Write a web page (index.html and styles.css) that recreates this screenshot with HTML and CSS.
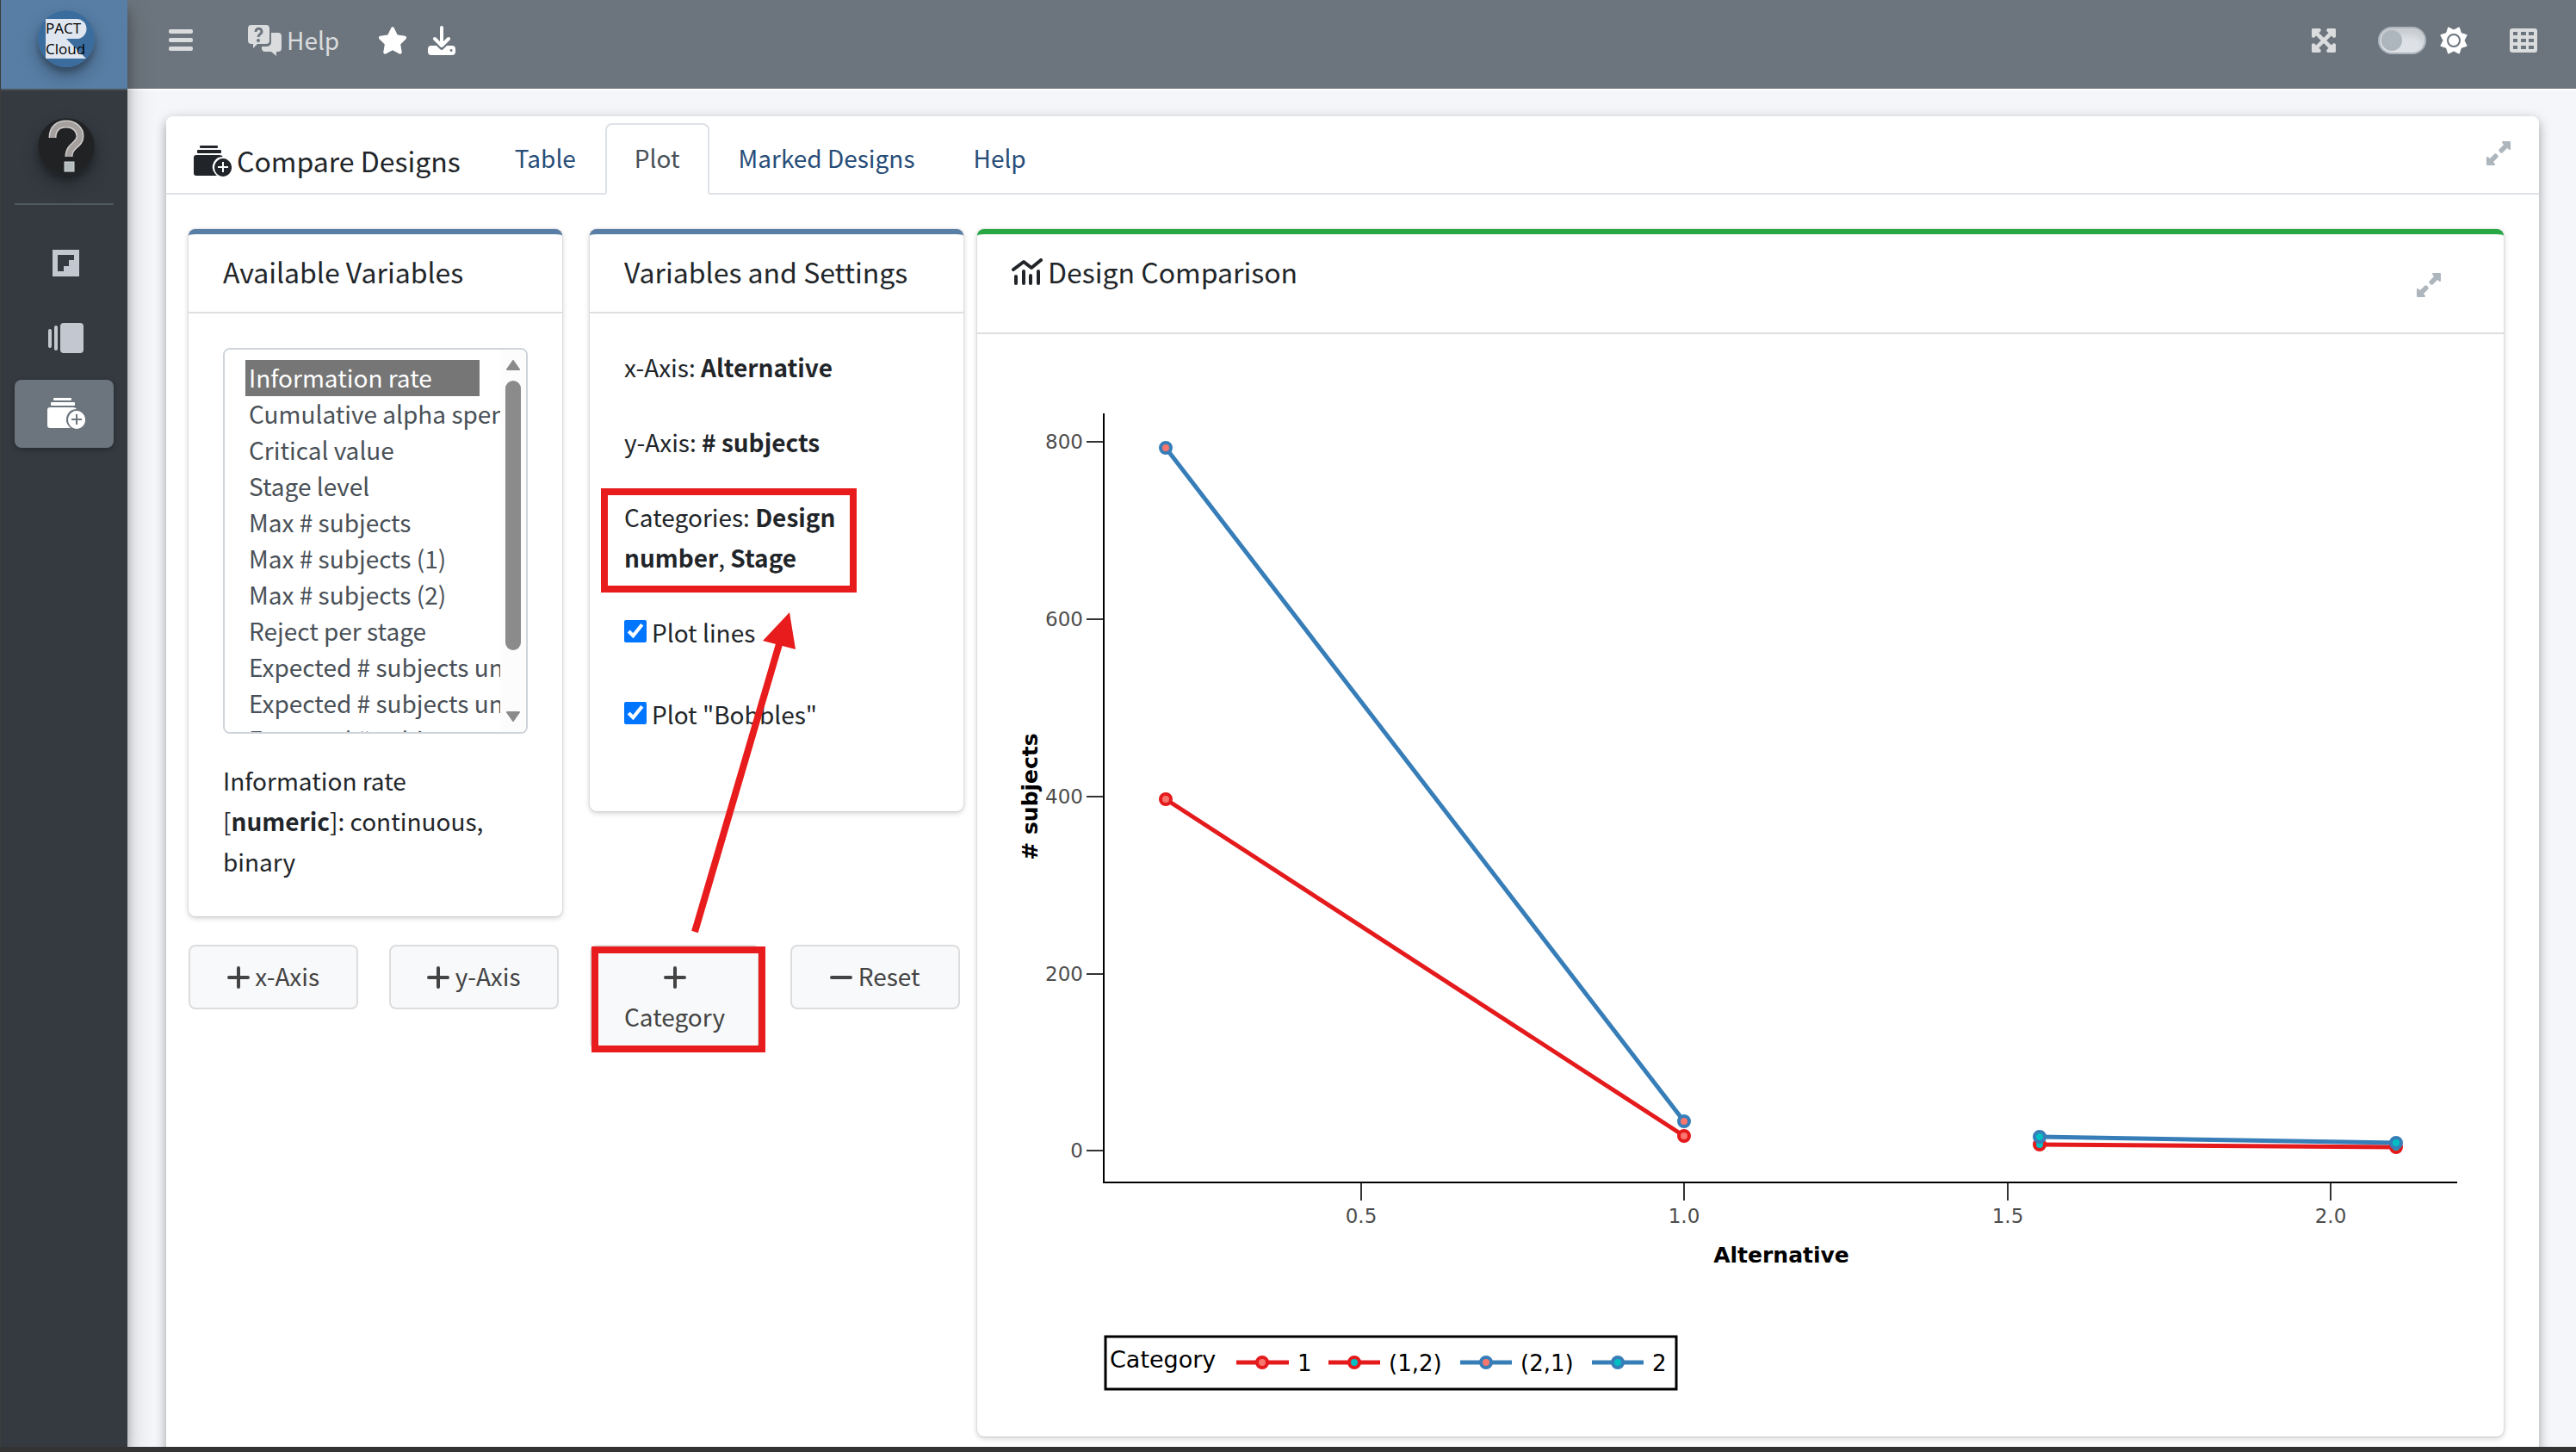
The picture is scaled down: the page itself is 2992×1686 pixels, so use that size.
FILE: index.html
```
<!DOCTYPE html>
<html lang="en">
<head>
  <meta charset="UTF-8">
  <meta name="viewport" content="width=device-width, initial-scale=1.0">
  <title>PACT Cloud - Compare Designs</title>
  <link rel="stylesheet" href="styles.css">
</head>
<body>
  <svg class="sprite" aria-hidden="true">
    <symbol id="designs" viewBox="0 0 44 36">
      <rect x="7" y="0" width="21" height="3" rx="1"/>
      <rect x="4" y="5" width="28" height="4" rx="1"/>
      <path d="M3 11h27a5 5 0 0 1 4 2a12 12 0 0 0-9 20 l2 2H3a3 3 0 0 1-3-3V14a3 3 0 0 1 3-3z"/>
      <path fill-rule="evenodd" d="M34 15a10 10.500 0 1 0 .1 0zM33 19h2v5h5v2h-5v5h-2v-5h-5v-2h5z"/>
    </symbol>
    <symbol id="expand" viewBox="0 0 28 28">
      <path d="M19 0h8a1 1 0 0 1 1 1v8a1 1 0 0 1-1.700.7L24 8l-5 5a2 2 0 0 1-3 0l-1-1a2 2 0 0 1 0-3l5-5-1.700-2.300A1 1 0 0 1 19 0z"/>
      <path d="M9 28H1a1 1 0 0 1-1-1v-8a1 1 0 0 1 1.700-.7L4 20l5-5a2 2 0 0 1 3 0l1 1a2 2 0 0 1 0 3l-5 5 1.700 2.300A1 1 0 0 1 9 28z"/>
    </symbol>
    <symbol id="plus" viewBox="0 0 26 26">
      <path d="M13 2v22M2 13h22" stroke="currentColor" stroke-width="4" stroke-linecap="round"/>
    </symbol>
    <symbol id="minus" viewBox="0 0 26 26">
      <path d="M2 13h22" stroke="currentColor" stroke-width="4" stroke-linecap="round"/>
    </symbol>
  </svg>

  <aside class="sidebar">
    <a class="brand" href="#" aria-label="PACT Cloud">
      <svg class="logo" viewBox="0 0 66 66">
        <circle cx="33" cy="33" r="33" fill="#3b6c9e"/>
        <path d="M9 10h36a11 11 0 0 1 0 23H33l23 23H9z" fill="#dfe6ef"/>
        <text x="9" y="27">PACT</text>
        <text x="9" y="51">Cloud</text>
      </svg>
    </a>
    <a class="user" href="#" aria-label="User">
      <svg class="avatar" viewBox="0 0 66 66">
        <circle cx="33" cy="33" r="33" fill="#202224"/>
        <path d="M17 23c0-11 7-16 16-16s16 6 16 14c0 11-13 10-13 24" fill="none" stroke="#cfcccb" stroke-width="9"/>
        <path d="M17 23c0-11 7-16 16-16s16 6 16 14c0 11-13 10-13 24" fill="none" stroke="#a5a09e" stroke-width="6"/>
        <rect x="31" y="51" width="11" height="11" fill="#b4bdbd" stroke="#d3d3d3"/>
      </svg>
    </a>
    <nav class="side-nav">
      <a href="#" aria-label="Boards">
        <svg width="31" height="31" viewBox="0 0 31 31"><path fill-rule="evenodd" d="M0 0h31v31H0zM6 6v19h7v-6h6v-7h6V6z"/></svg>
      </a>
      <a href="#" aria-label="Layers">
        <svg width="41" height="35" viewBox="0 0 41 35"><rect x="0" y="7" width="4" height="22" rx="2"/><rect x="7" y="3" width="4" height="29" rx="2"/><rect x="14" y="0" width="27" height="35" rx="4"/></svg>
      </a>
      <a class="active" href="#" aria-label="Compare Designs">
        <svg width="44" height="36"><use href="#designs"/></svg>
      </a>
    </nav>
  </aside>

  <div class="page">
    <header class="navbar">
      <button class="icon-btn menu-btn" aria-label="Toggle menu">
        <svg width="28" height="26" viewBox="0 0 28 26"><rect width="28" height="5" rx="2"/><rect y="10" width="28" height="5" rx="2"/><rect y="20" width="28" height="5" rx="2"/></svg>
      </button>
      <a class="help-link" href="#">
        <svg width="39" height="36" viewBox="0 0 39 36">
          <path d="M4 0h17a4 4 0 0 1 4 4v14a4 4 0 0 1-4 4H11l-5 5v-5H4a4 4 0 0 1-4-4V4a4 4 0 0 1 4-4z"/>
          <path d="M27 9h8a4 4 0 0 1 4 4v14a4 4 0 0 1-4 4h-2v5l-6-5h-7a4 4 0 0 1-4-4v-2h6a5 5 0 0 0 5-5z"/>
          <path d="M9 8c0-5 7-5 7 0 0 3-4 2-4 6" fill="none" stroke="#6c757d" stroke-width="3"/>
          <circle cx="12" cy="18" r="2" fill="#6c757d"/>
        </svg>
        Help
      </a>
      <button class="icon-btn star-btn" aria-label="Bookmark">
        <svg width="32" height="34" viewBox="26 0 524 512"><path d="M316.900 18C311.600 7 300.400 0 288.100 0s-23.400 7-28.800 18L195 150.300 51.400 171.500c-12 1.800-22 10.200-25.700 21.700s-.7 24.200 7.900 32.700L137.800 329 113.200 474.700c-2 12 3 24.200 12.900 31.300s23 8 33.800 2.300l128.300-68.500 128.300 68.500c10.800 5.700 23.900 4.900 33.800-2.300s14.900-19.300 12.900-31.300L438.500 329 542.700 225.900c8.600-8.500 11.700-21.200 7.900-32.700s-13.700-19.900-25.700-21.700L381.200 150.300 316.900 18z"/></svg>
      </button>
      <button class="icon-btn" aria-label="Download">
        <svg width="32" height="34" viewBox="0 0 32 34">
          <path fill-rule="evenodd" d="M4 23h6l4 4a3 3 0 0 0 4 0l4-4h6a4 4 0 0 1 4 4v3a4 4 0 0 1-4 4H4a4 4 0 0 1-4-4v-3a4 4 0 0 1 4-4zM27 27a1.500 1.500 0 1 0 .1 0z"/>
          <path d="M16 2v21M8 15l8 8 8-8" fill="none" stroke="currentColor" stroke-width="4" stroke-linecap="round" stroke-linejoin="round"/>
        </svg>
      </button>
      <div class="nav-right">
        <button class="icon-btn dim" aria-label="Full screen">
          <svg class="bold-icon" width="28" height="28" viewBox="-8 24 464 464"><path d="M448 344v112a23.940 23.940 0 0 1-24 24H312c-21.390 0-32.090-25.900-17-41l36.200-36.200L224 295.600 116.770 402.900 153 439c15.090 15.100 4.390 41-17 41H24a23.940 23.940 0 0 1-24-24V344c0-21.400 25.890-32.100 41-17l36.190 36.200L184.460 256 77.180 148.700 41 185c-15.100 15.100-41 4.400-41-17V56a23.940 23.940 0 0 1 24-24h112c21.390 0 32.090 25.900 17 41l-36.200 36.200L224 216.400l107.230-107.300L295 73c-15.090-15.100-4.390-41 17-41h112a23.940 23.940 0 0 1 24 24v112c0 21.400-25.890 32.100-41 17l-36.190-36.200L263.540 256l107.280 107.300L407 327.100c15.100-15.200 41-4.500 41 16.900z"/></svg>
        </button>
        <label class="theme-switch">
          <input type="checkbox" role="switch" aria-label="Dark mode">
          <svg width="32" height="32" viewBox="0 0 32 32">
            <path d="M9.700.8 16 4 22.300.8 24.500 7.500 31.200 9.700 28 16 31.200 22.300 24.500 24.500 22.300 31.200 16 28 9.700 31.200 7.500 24.500.8 22.300 4 16 .8 9.700 7.500 7.500z" fill="#fff" stroke="#fff" stroke-linejoin="round"/>
            <circle cx="16" cy="16" r="7" fill="none" stroke="#6c757d" stroke-width="2"/>
          </svg>
        </label>
        <button class="icon-btn dim" aria-label="Apps">
          <svg width="32" height="28" viewBox="0 0 32 28"><path fill-rule="evenodd" d="M3 0h26a3 3 0 0 1 3 3v22a3 3 0 0 1-3 3H3a3 3 0 0 1-3-3V3a3 3 0 0 1 3-3zM4 4v4h5V4zM13 4v4h6V4zM22 4v4h6V4zM4 12v4h5v-4zM13 12v4h6v-4zM22 12v4h6v-4zM4 20v4h5v-4zM13 20v4h6v-4zM22 20v4h6v-4z"/></svg>
        </button>
      </div>
    </header>

    <main class="content">
      <section class="tab-card">
        <div class="tab-header">
          <h1><svg width="44" height="36"><use href="#designs"/></svg> Compare Designs</h1>
          <nav class="tabs">
            <a href="#">Table</a>
            <a class="active" href="#">Plot</a>
            <a href="#">Marked Designs</a>
            <a href="#">Help</a>
          </nav>
          <button class="expand-btn" aria-label="Maximize"><svg width="28" height="28"><use href="#expand"/></svg></button>
        </div>

        <div class="tab-body">
          <div class="controls">
            <div class="panels">
              <div class="card">
                <h2><label for="variables">Available Variables</label></h2>
                <div class="card-body">
                  <div class="list-box">
                    <select id="variables" class="variables" size="10" multiple>
                      <option selected>Information rate</option>
                      <option>Cumulative alpha spent</option>
                      <option>Critical value</option>
                      <option>Stage level</option>
                      <option>Max # subjects</option>
                      <option>Max # subjects (1)</option>
                      <option>Max # subjects (2)</option>
                      <option>Reject per stage</option>
                      <option>Expected # subjects under H0</option>
                      <option>Expected # subjects under H1</option>
                      <option>Expected # subjects under H01</option>
                      <option>Futility stop</option>
                    </select>
                    <div class="scrollbar" aria-hidden="true">
                      <svg width="16" height="12" viewBox="0 0 16 12"><path d="M8 1 15 11H1z"/></svg>
                      <div class="thumb"></div>
                      <svg width="16" height="12" viewBox="0 0 16 12"><path d="M8 11 15 1H1z"/></svg>
                    </div>
                  </div>
                  <p class="description">Information rate [<b>numeric</b>]: continuous, binary</p>
                </div>
              </div>

              <div class="card">
                <h2>Variables and Settings</h2>
                <div class="card-body settings">
                  <p>x-Axis: <b>Alternative</b></p>
                  <p>y-Axis: <b># subjects</b></p>
                  <p class="categories">Categories: <b>Design number</b>, <b>Stage</b></p>
                  <label class="check"><input type="checkbox" checked> Plot lines</label>
                  <label class="check"><input type="checkbox" checked> Plot "Bobbles"</label>
                </div>
              </div>
            </div>

            <div class="actions">
              <button><svg width="26" height="26"><use href="#plus"/></svg> x-Axis</button>
              <button><svg width="26" height="26"><use href="#plus"/></svg> y-Axis</button>
              <button class="category"><svg width="26" height="26"><use href="#plus"/></svg> Category</button>
              <button><svg width="26" height="26"><use href="#minus"/></svg> Reset</button>
            </div>

            <svg class="arrow" width="130" height="376" viewBox="0 0 130 376">
              <path d="M8 372 106 38" stroke="#e81c1c" stroke-width="8"/>
              <path d="M118 1 87 34 125 44z" fill="#e81c1c"/>
            </svg>
          </div>

          <div class="card plot-card">
            <div class="plot-header">
              <h2>
                <svg width="36" height="32" viewBox="0 0 36 32"><path d="M2 13 14 4l9 7L34 2" fill="none" stroke="currentColor" stroke-width="4" stroke-linecap="round" stroke-linejoin="round"/><path d="M5 21v8M14 15v14M22 20v9M31 15v14" stroke="currentColor" stroke-width="4" stroke-linecap="round"/></svg>
                Design Comparison
              </h2>
              <button class="expand-btn" aria-label="Maximize"><svg width="28" height="28"><use href="#expand"/></svg></button>
            </div>
            <svg class="chart" viewBox="0 0 1773 1280" role="img" aria-label="Number of subjects by alternative">
              <g class="ticks">
                <path d="M127 125h20M127 331h20M127 537h20M127 743h20M127 948h20M446 986v20M821 986v20M1197 986v20M1572 986v20"/>
              </g>
              <path class="axis" d="M147 92V985H1719"/>
              <g class="y-labels">
                <text x="123" y="133">800</text>
                <text x="123" y="339">600</text>
                <text x="123" y="545">400</text>
                <text x="123" y="751">200</text>
                <text x="123" y="956">0</text>
              </g>
              <g class="x-labels">
                <text x="446" y="1032">0.5</text>
                <text x="821" y="1032">1.0</text>
                <text x="1197" y="1032">1.5</text>
                <text x="1572" y="1032">2.0</text>
              </g>
              <text class="axis-title" x="934" y="1078">Alternative</text>
              <text class="axis-title" transform="translate(70 537) rotate(-90)"># subjects</text>

              <g class="lines">
                <path class="red" d="M219 540 821 931M1234 941 1648 944"/>
                <path class="blue" d="M219 132 821 914M1234 932 1648 939"/>
              </g>
              <g class="dots">
                <circle class="red salmon" cx="219" cy="540" r="6"/>
                <circle class="red salmon" cx="821" cy="931" r="6"/>
                <circle class="red teal" cx="1234" cy="941" r="6"/>
                <circle class="red teal" cx="1648" cy="944" r="6"/>
                <circle class="blue salmon" cx="219" cy="132" r="6"/>
                <circle class="blue salmon" cx="821" cy="914" r="6"/>
                <circle class="blue teal" cx="1234" cy="932" r="6"/>
                <circle class="blue teal" cx="1648" cy="939" r="6"/>
              </g>

              <!-- legend -->
              <rect class="legend-box" x="149" y="1164" width="663" height="61"/>
              <g class="lines">
                <path class="red" d="M301 1194h61M408 1194h60"/>
                <path class="blue" d="M561 1194h60M714 1194h60"/>
              </g>
              <g class="dots">
                <circle class="red salmon" cx="331" cy="1194" r="6"/>
                <circle class="red teal" cx="438" cy="1194" r="6"/>
                <circle class="blue salmon" cx="591" cy="1194" r="6"/>
                <circle class="blue teal" cx="744" cy="1194" r="6"/>
              </g>
              <g class="legend-text">
                <text class="legend-title" x="154" y="1200">Category</text>
                <text x="372" y="1204">1</text>
                <text x="478" y="1204">(1,2)</text>
                <text x="631" y="1204">(2,1)</text>
                <text x="784" y="1204">2</text>
              </g>
            </svg>
          </div>
        </div>
      </section>
    </main>
  </div>
</body>
</html>
```
FILE: styles.css
```
* {
  box-sizing: border-box;
}
body {
  margin: 0;
  height: 100vh;
  display: flex;
  overflow: hidden;
  border-left: 1px solid #3c3c3c;
  border-bottom: 6px solid #333;
  background: #f4f6f9;
  color: #212529;
  font-family: "Noto Sans CJK SC", "Open Sans", sans-serif;
  font-size: 28px;
  line-height: 47px;
}
h1, h2, p {
  margin: 0;
  font-weight: 400;
}
a {
  color: inherit;
  text-decoration: none;
}
button {
  font: inherit;
  cursor: pointer;
}
svg {
  fill: currentColor;
}
.sprite {
  position: absolute;
  width: 0;
  height: 0;
}

/* sidebar */
.sidebar {
  flex: 0 0 147px;
  z-index: 2;
  background: #343a40;
  box-shadow: 0 14px 28px rgba(0, 0, 0, 0.25), 0 10px 10px rgba(0, 0, 0, 0.22);
}
.brand {
  display: flex;
  justify-content: center;
  height: 105px;
  padding-top: 12px;
  padding-left: 4px;
  background: #587ea6;
  border-bottom: 2px solid #4b545c;
}
.logo, .avatar {
  width: 66px;
  height: 66px;
  border-radius: 50%;
  box-shadow: 0 10px 20px rgba(0, 0, 0, 0.3), 0 6px 6px rgba(0, 0, 0, 0.2);
}
.logo text {
  font-family: "Open Sans", sans-serif;
  font-size: 17px;
  fill: #000;
}
.user {
  display: flex;
  justify-content: center;
  height: 133px;
  margin: 0 16px;
  padding-top: 32px;
  padding-left: 4px;
  border-bottom: 2px solid #4f5962;
}
.side-nav {
  display: flex;
  flex-direction: column;
  gap: 8px;
  padding: 29px 16px;
  color: #c2c7d0;
}
.side-nav a {
  display: flex;
  align-items: center;
  justify-content: center;
  height: 79px;
  padding: 0 0 2px 4px;
  border-radius: 8px;
}
.side-nav .active {
  background: #6c757d;
  color: #fff;
  box-shadow: 0 2px 6px rgba(0, 0, 0, 0.3);
}

/* top bar */
.page {
  flex: 1;
  min-width: 0;
  display: flex;
  flex-direction: column;
}
.navbar {
  display: flex;
  flex: 0 0 105px;
  align-items: center;
  padding: 0 45px 10px 48px;
  background: #6c757d;
  border-bottom: 2px solid #fff;
  color: #fff;
}
.icon-btn {
  display: flex;
  padding: 0;
  border: 0;
  background: none;
  color: #fff;
}
.menu-btn, .help-link, .dim {
  color: #dadcde;
}
.bold-icon {
  stroke: currentColor;
  stroke-width: 20px;
}
.help-link {
  display: flex;
  align-items: center;
  gap: 6px;
  margin-left: 64px;
}
.star-btn {
  margin: 0 25px 0 46px;
}
.nav-right {
  display: flex;
  align-items: center;
  gap: 49px;
  margin-left: auto;
}
.theme-switch {
  display: flex;
  align-items: center;
  gap: 16px;
}
.theme-switch input {
  appearance: none;
  width: 56px;
  height: 32px;
  margin: 0;
  padding: 2px;
  border: 2px solid #adb5bd;
  border-radius: 16px;
  background: #dee2e6;
  box-shadow: inset 0 8px 8px rgba(0, 0, 0, 0.1);
}
.theme-switch input::before {
  content: "";
  display: block;
  width: 24px;
  height: 24px;
  border-radius: 50%;
  background: #adb5bd;
}

/* main card */
.content {
  flex: 1;
  min-height: 0;
  padding: 30px 43px 0 45px;
}
.tab-card {
  background: #fff;
  border-radius: 8px;
  box-shadow: 0 6px 12px rgba(0, 0, 0, 0.25), 0 2px 16px rgba(0, 0, 0, 0.12);
}
.tab-header {
  display: flex;
  align-items: flex-end;
  height: 91px;
  padding: 0 33px 0 32px;
  border-bottom: 2px solid #dee2e6;
}
h1 {
  display: flex;
  align-items: center;
  gap: 6px;
  padding-bottom: 14px;
  font-size: 32px;
}
.tabs {
  display: flex;
  margin: 0 auto -2px 29px;
}
.tabs a {
  height: 83px;
  padding: 15px 32px 0;
  border: 2px solid transparent;
  border-radius: 8px 8px 0 0;
  color: #274d78;
}
.tabs .active {
  background: #fff;
  border-color: #dee2e6 #dee2e6 #fff;
  color: #495057;
}
.expand-btn {
  display: flex;
  align-self: center;
  padding: 0 0 4px;
  border: 0;
  background: none;
  color: #adb5bd;
}
.tab-body {
  display: grid;
  grid-template-columns: minmax(0, 900fr) minmax(0, 1773fr);
  align-items: start;
  gap: 16px;
  padding: 40px 41px 40px 26px;
}
.card {
  border-top: 6px solid #587ea6;
  border-radius: 8px;
  background: #fff;
  box-shadow: 0 0 2px rgba(0, 0, 0, 0.2), 0 2px 6px rgba(0, 0, 0, 0.2);
}
h2 {
  font-size: 32px;
}
.card > h2 {
  padding: 20px 32px 23px 40px;
  border-bottom: 2px solid #dfdfdf;
}
.card-body {
  padding: 40px;
}

/* left column */
.controls {
  position: relative;
}
.panels {
  display: grid;
  grid-template-columns: repeat(2, minmax(0, 1fr));
  align-items: start;
  gap: 32px;
}
.list-box {
  display: flex;
  height: 448px;
  border: 2px solid #ced4da;
  border-radius: 8px;
  overflow: hidden;
}
.variables {
  flex: 1;
  min-width: 0;
  padding: 12px 24px;
  border: 0;
  background: #fff;
  color: #495057;
  font: inherit;
  outline: 0;
  scrollbar-width: none;
}
.variables option {
  min-height: 42px;
  padding: 0 4px 2px;
  line-height: 40px;
}
.variables option:checked {
  background: #767676 linear-gradient(#767676, #767676);
  color: #fff;
}
.scrollbar {
  display: flex;
  flex: 0 0 30px;
  flex-direction: column;
  align-items: center;
  padding: 12px 0;
  background: #fcfcfc;
  color: #8b8b8b;
}
.scrollbar path {
  stroke: currentColor;
  stroke-width: 2px;
  stroke-linejoin: round;
}
.thumb {
  width: 18px;
  height: 313px;
  margin: 12px 0 auto;
  border-radius: 9px;
  background: #8b8b8b;
}
.description {
  margin-top: 31px;
}
.settings {
  display: flex;
  flex-direction: column;
  gap: 40px;
  padding: 39px 40px 89px;
}
.categories {
  position: relative;
}
.categories::after,
.category::after {
  content: "";
  position: absolute;
  border: 8px solid #e81c1c;
}
.categories::after {
  inset: -10px 84px -17px -27px;
}
.category::after {
  inset: 0 -9px -5px 0;
}
.check {
  display: flex;
  align-items: center;
  gap: 6px;
}
.check + .check {
  margin-top: 8px;
}
.check input {
  width: 26px;
  height: 26px;
  margin: 0 0 4px;
  accent-color: #0075ff;
}
.actions {
  display: grid;
  grid-template-columns: repeat(4, minmax(0, 1fr));
  align-items: start;
  gap: 36px;
  margin-top: 33px;
  padding-right: 4px;
}
.actions button {
  position: relative;
  padding: 11px 24px 13px;
  border: 2px solid #ddd;
  border-radius: 8px;
  background: #f8f9fa;
  color: #444;
}
.actions svg {
  vertical-align: -3px;
}
.arrow {
  position: absolute;
  top: 444px;
  left: 580px;
}

/* plot */
.plot-card {
  border-top-color: #28a745;
}
.plot-header {
  display: flex;
  justify-content: space-between;
  align-items: flex-start;
  height: 116px;
  padding: 20px 73px 0 40px;
  border-bottom: 2px solid #dfdfdf;
}
.plot-header h2 {
  display: flex;
  gap: 6px;
  align-items: center;
}
.plot-header .expand-btn {
  margin-top: 25px;
  align-self: flex-start;
}
.chart {
  display: block;
  width: 100%;
  font-family: "DejaVu Sans", sans-serif;
}
.axis, .ticks path, .lines path, .legend-box {
  fill: none;
}
.axis {
  stroke: #000;
  stroke-width: 2;
}
.ticks {
  stroke: #333;
  stroke-width: 2;
}
.y-labels, .x-labels {
  fill: #4d4d4d;
  font-size: 23px;
}
.y-labels {
  text-anchor: end;
}
.x-labels, .axis-title {
  text-anchor: middle;
}
.axis-title {
  fill: #000;
  font-size: 25px;
  font-weight: 700;
}
.lines {
  stroke-width: 5;
}
.dots {
  stroke-width: 4;
}
.red {
  stroke: #e41a1c;
}
.blue {
  stroke: #377eb8;
}
.salmon {
  fill: #f8766d;
}
.teal {
  fill: #00bfc4;
}
.legend-box {
  stroke: #000;
  stroke-width: 3;
}
.legend-text {
  fill: #000;
  font-size: 26px;
}
.legend-title {
  font-size: 27px;
}
```
